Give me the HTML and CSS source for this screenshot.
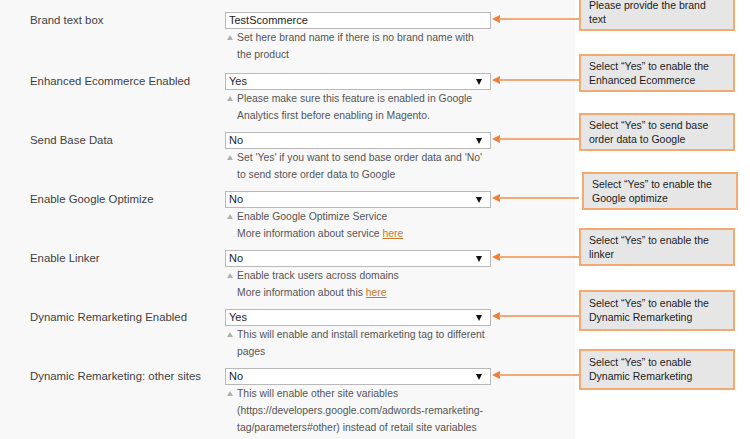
FILE: index.html
```html
<!DOCTYPE html>
<html>
<head>
<meta charset="utf-8">
<link rel="stylesheet" href="styles.css">
</head>
<body>
<div class="page">
  <div class="panel">
    <div class="row first">
      <div class="label">Brand text box</div>
      <div class="field">
        <div class="input">TestScommerce</div>
        <div class="hint">Set here brand name if there is no brand name with<br>the product</div>
      </div>
      <div class="note"><span class="arrow"></span><div class="callout">Please provide the brand text</div></div>
    </div>
    <div class="row">
      <div class="label">Enhanced Ecommerce Enabled</div>
      <div class="field">
        <div class="input select">Yes</div>
        <div class="hint">Please make sure this feature is enabled in Google<br>Analytics first before enabling in Magento.</div>
      </div>
      <div class="note"><span class="arrow"></span><div class="callout">Select “Yes” to enable the Enhanced Ecommerce</div></div>
    </div>
    <div class="row">
      <div class="label">Send Base Data</div>
      <div class="field">
        <div class="input select">No</div>
        <div class="hint">Set 'Yes' if you want to send base order data and 'No'<br>to send store order data to Google</div>
      </div>
      <div class="note"><span class="arrow"></span><div class="callout">Select “Yes” to send base order data to Google</div></div>
    </div>
    <div class="row">
      <div class="label">Enable Google Optimize</div>
      <div class="field">
        <div class="input select">No</div>
        <div class="hint">Enable Google Optimize Service<br>More information about service <a href="#">here</a></div>
      </div>
      <div class="note"><span class="arrow"></span><div class="callout shift">Select “Yes” to enable the Google optimize</div></div>
    </div>
    <div class="row">
      <div class="label">Enable Linker</div>
      <div class="field">
        <div class="input select">No</div>
        <div class="hint">Enable track users across domains<br>More information about this <a href="#">here</a></div>
      </div>
      <div class="note"><span class="arrow"></span><div class="callout up">Select “Yes” to enable the linker</div></div>
    </div>
    <div class="row">
      <div class="label">Dynamic Remarketing Enabled</div>
      <div class="field">
        <div class="input select">Yes</div>
        <div class="hint">This will enable and install remarketing tag to different<br>pages</div>
      </div>
      <div class="note"><span class="arrow"></span><div class="callout tall">Select “Yes” to enable the Dynamic Remarketing</div></div>
    </div>
    <div class="row">
      <div class="label">Dynamic Remarketing: other sites</div>
      <div class="field">
        <div class="input select">No</div>
        <div class="hint">This will enable other site variables<br>(https://developers.google.com/adwords-remarketing-<br>tag/parameters#other) instead of retail site variables</div>
      </div>
      <div class="note"><span class="arrow"></span><div class="callout tall">Select “Yes” to enable<br>Dynamic Remarketing</div></div>
    </div>
  </div>
</div>
</body>
</html>
```
FILE: styles.css
```css
html, body {
  margin: 0;
  padding: 0;
  background: #ffffff;
  overflow: hidden;
}

.page {
  width: 750px;
  height: 439px;
  display: flex;
  font-family: "Liberation Sans", Arial, sans-serif;
}

.panel {
  width: 575px;
  height: 439px;
  background: #f8f8f8;
  padding-top: 12px;
  box-sizing: border-box;
}

.row {
  position: relative;
  display: flex;
  margin-bottom: 8px;
}

.row.first {
  margin-bottom: 10px;
}

.label {
  width: 225px;
  box-sizing: border-box;
  padding-left: 30px;
  font-size: 11.4px;
  line-height: 17px;
  color: #3f3f3f;
  white-space: nowrap;
}

.field {
  width: 266px;
}

.input {
  position: relative;
  height: 17px;
  box-sizing: border-box;
  border: 1px solid #b9b9b9;
  background: #ffffff;
  padding-left: 3px;
  font-size: 11px;
  line-height: 15px;
  color: #1e1e1e;
}

.input.select::after {
  content: "";
  position: absolute;
  right: 8px;
  top: 5px;
  border-top: 6px solid #111111;
  border-left: 3.5px solid transparent;
  border-right: 3.5px solid transparent;
}

.hint {
  position: relative;
  padding-left: 12px;
  font-size: 10.4px;
  line-height: 17px;
  color: #555555;
  white-space: nowrap;
}

.hint::before {
  content: "";
  position: absolute;
  left: 2px;
  top: 6px;
  border-bottom: 5px solid #b0b0b0;
  border-left: 3px solid transparent;
  border-right: 3px solid transparent;
}

.hint a {
  color: #c47a2a;
  text-decoration: underline;
}

.note {
  position: absolute;
  left: 492px;
  top: 0;
}

.arrow {
  position: absolute;
  left: 0;
  top: 3px;
  width: 0;
  height: 0;
  border-right: 8px solid #ef7f36;
  border-top: 4px solid transparent;
  border-bottom: 4px solid transparent;
}

.arrow::after {
  content: "";
  position: absolute;
  left: 7px;
  top: -1px;
  width: 80px;
  height: 2px;
  background: #f5a877;
}

.callout {
  position: absolute;
  left: 87px;
  top: -19px;
  width: 156px;
  box-sizing: border-box;
  background: #e6e6e6;
  border: 2px solid #f4a971;
  padding: 3px 8px 3px 8px;
  font-size: 10.5px;
  line-height: 14px;
  color: #1c1c1c;
}

.callout.shift {
  left: 90px;
}

.callout.up {
  top: -22px;
}

.callout.tall {
  padding-top: 4px;
  padding-bottom: 5px;
}
```
